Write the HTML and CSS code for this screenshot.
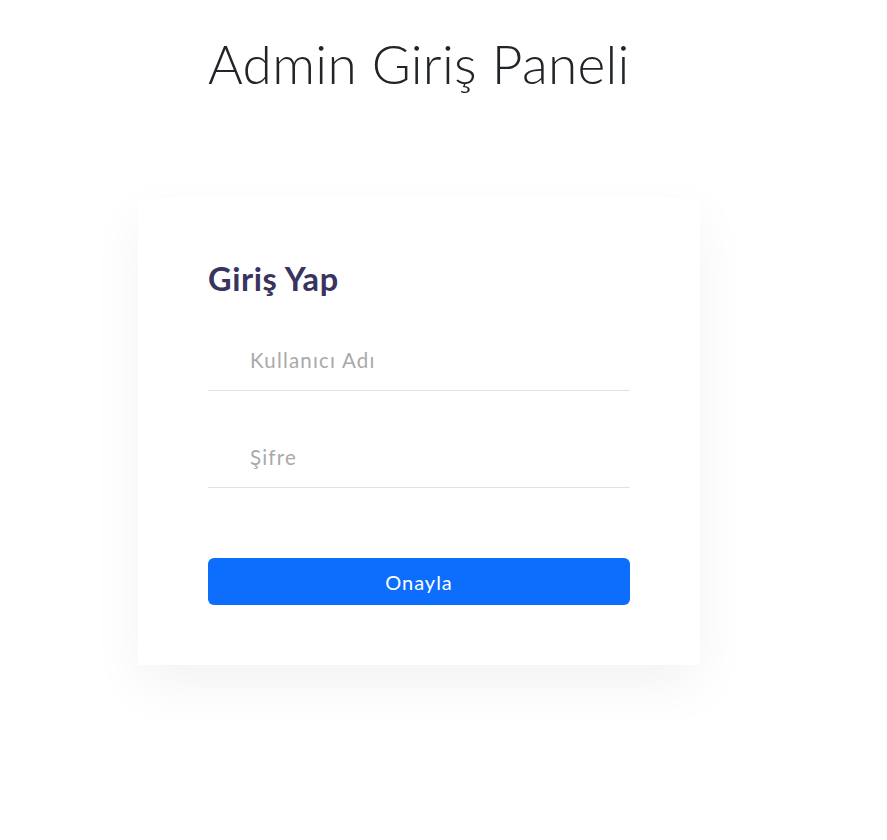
FILE: index.html
```html
<!DOCTYPE html>
<html lang="tr">
<head>
<meta charset="utf-8">
<title>Admin Giriş Paneli</title>
<link rel="stylesheet" href="styles.css">
</head>
<body>
<main class="page">
  <h1 class="page-title">Admin Giriş Paneli</h1>
  <section class="card">
    <h2 class="card-title">Giriş Yap</h2>
    <form class="login-form">
      <div class="field"><input class="field-input" type="text" placeholder="Kullanıcı Adı"></div>
      <div class="field"><input class="field-input" type="password" placeholder="Şifre"></div>
      <button class="submit-btn" type="button">Onayla</button>
    </form>
  </section>
</main>
</body>
</html>
```

FILE: styles.css
```css
* { box-sizing: border-box; }
html, body { margin: 0; padding: 0; background: #fff; }
body {
  font-family: "Lato", "Noto Sans", sans-serif;
  color: #212529;
}
.page {
  display: flex;
  flex-direction: column;
  align-items: flex-start;
  padding: 30px 0 120px;
}
.page-title {
  margin: 0 0 0 208px;
  font-weight: 300;
  font-size: 53.2px;
  line-height: 66px;
  color: #212529;
  letter-spacing: 0.3px;
}
.card {
  margin: 102px 0 0 138px;
  width: 562px;
  background: #fff;
  padding: 61px 70px 60px;
  box-shadow: 0 20px 50px rgba(0, 0, 0, 0.05);
}
.card-title {
  margin: 0;
  font-size: 32.5px;
  line-height: 40px;
  font-weight: 700;
  letter-spacing: 0.6px;
  color: #38335f;
}
.login-form {
  display: flex;
  flex-direction: column;
  margin-top: 30px;
}
.field {
  border-bottom: 1px solid #e2e2e2;
  height: 62px;
  display: flex;
  align-items: center;
  margin-bottom: 35px;
}
.field + .field { margin-bottom: 70px; }
.field-input {
  border: 0;
  outline: 0;
  background: transparent;
  width: 100%;
  padding: 0 0 0 42px;
  font-family: inherit;
  font-size: 20.5px;
  letter-spacing: 1.2px;
  color: #333;
}
.field-input::placeholder { color: #a9a9a9; }
.submit-btn {
  height: 47px;
  border: 0;
  border-radius: 6px;
  background: #0d6efd;
  color: #fff;
  font-family: inherit;
  font-size: 20px;
  letter-spacing: 1px;
  cursor: pointer;
}
```
